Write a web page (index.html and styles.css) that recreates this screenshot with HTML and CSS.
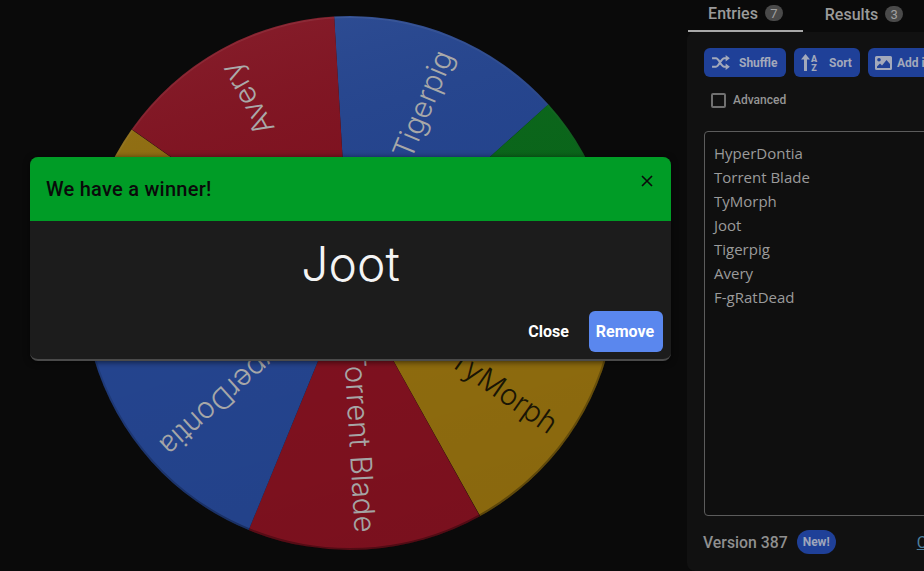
FILE: index.html
```html
<!DOCTYPE html>
<html lang="en">
<head>
<meta charset="utf-8">
<title>Wheel</title>
<link rel="stylesheet" href="styles.css">
</head>
<body>
<div class="page">
  <main class="stage">
    <svg class="wheel" width="534" height="534" viewBox="0 0 534 534">
      <defs>
        <linearGradient id="shade" x1="0.3" y1="0" x2="0.6" y2="1">
          <stop offset="0" stop-color="#fff" stop-opacity="0.05"/>
          <stop offset="0.5" stop-color="#000" stop-opacity="0"/>
          <stop offset="1" stop-color="#000" stop-opacity="0.04"/>
        </linearGradient>
        <linearGradient id="rim" x1="0.3" y1="0" x2="0.6" y2="1">
          <stop offset="0" stop-color="#fff" stop-opacity="0.08"/>
          <stop offset="0.5" stop-color="#000" stop-opacity="0.12"/>
          <stop offset="1" stop-color="#000" stop-opacity="0.35"/>
        </linearGradient>
      </defs>
      <g transform="translate(267 267)">
        <g transform="rotate(-67.7)"><path class="s-blue" d="M0 0L240.56 -115.85A267 267 0 0 1 240.56 115.85Z"/><text class="w-light" x="250" y="10" text-anchor="end">Tigerpig</text></g>
        <g transform="rotate(-16.3)"><path class="s-green" d="M0 0L240.56 -115.85A267 267 0 0 1 240.56 115.85Z"/><text class="w-light" x="250" y="10" text-anchor="end">Joot</text></g>
        <g transform="rotate(35.1)"><path class="s-yellow" d="M0 0L240.56 -115.85A267 267 0 0 1 240.56 115.85Z"/><text class="w-dark" x="250" y="10" text-anchor="end">TyMorph</text></g>
        <g transform="rotate(86.6)"><path class="s-red" d="M0 0L240.56 -115.85A267 267 0 0 1 240.56 115.85Z"/><text class="w-light" x="250" y="10" text-anchor="end">Torrent Blade</text></g>
        <g transform="rotate(138)"><path class="s-blue" d="M0 0L240.56 -115.85A267 267 0 0 1 240.56 115.85Z"/><text class="w-light" x="250" y="10" text-anchor="end">HyperDontia</text></g>
        <g transform="rotate(189.4)"><path class="s-yellow" d="M0 0L240.56 -115.85A267 267 0 0 1 240.56 115.85Z"/><text class="w-dark" x="250" y="10" text-anchor="end">F-gRatDead</text></g>
        <g transform="rotate(240.9)"><path class="s-red" d="M0 0L240.56 -115.85A267 267 0 0 1 240.56 115.85Z"/><text class="w-light" x="250" y="10" text-anchor="end">Avery</text></g>
        <circle class="wheel-shade" r="266"/>
      </g>
    </svg>
  </main>

  <aside class="side">
    <nav class="tabs">
      <div class="tab tab-active"><span>Entries</span><span class="count">7</span></div>
      <div class="tab"><span>Results</span><span class="count">3</span></div>
    </nav>
    <section class="panel">
      <div class="tools">
        <button class="tool tool-shuffle">
          <svg class="ico" width="19" height="15" viewBox="0 0 20 16"><path class="ico-line" d="M1 3.500H5.200C8.500 3.500 10.500 12.500 14 12.500H16M1 12.500H5.200C8.500 12.500 10.500 3.500 14 3.500H16"/><path class="ico-fill" d="M15.500 0L20 3.500L15.500 7ZM15.500 9L20 12.500L15.500 16Z"/></svg>
          <span>Shuffle</span>
        </button>
        <button class="tool tool-sort">
          <svg class="ico" width="18" height="17" viewBox="0 0 18 17"><path class="ico-fill" d="M4.500 0L9 5.500H6V17H3V5.500H0Z"/><text class="ico-text" x="13" y="7.500" text-anchor="middle">A</text><text class="ico-text" x="13" y="16.500" text-anchor="middle">Z</text></svg>
          <span>Sort</span>
        </button>
        <button class="tool tool-image">
          <svg class="ico" width="17" height="14" viewBox="0 0 17 14"><path class="ico-fill" fill-rule="evenodd" d="M1.500 0H15.500A1.500 1.500 0 0 1 17 1.500V12.500A1.500 1.500 0 0 1 15.500 14H1.500A1.500 1.500 0 0 1 0 12.500V1.500A1.500 1.500 0 0 1 1.500 0ZM4 2A1.800 1.800 0 1 0 4 5.600A1.800 1.800 0 1 0 4 2ZM2 12H15V8L11.500 4L7 9.500L5 7.500L2 10.500Z"/></svg>
          <span>Add image</span>
        </button>
      </div>
      <label class="advanced"><span class="check"></span><span>Advanced</span></label>
      <div class="entries">
        <div>HyperDontia</div>
        <div>Torrent Blade</div>
        <div>TyMorph</div>
        <div>Joot</div>
        <div>Tigerpig</div>
        <div>Avery</div>
        <div>F-gRatDead</div>
      </div>
      <footer class="foot">
        <span>Version 387</span>
        <span class="new">New!</span>
        <a class="log" href="#">Changelog</a>
      </footer>
    </section>
  </aside>
</div>

<div class="modal">
  <header class="modal-head">
    <span>We have a winner!</span>
    <svg class="modal-x" width="12" height="12" viewBox="0 0 12 12"><path d="M1 1L11 11M11 1L1 11"/></svg>
  </header>
  <div class="modal-body">Joot</div>
  <div class="modal-actions">
    <button class="btn-close">Close</button>
    <button class="btn-remove">Remove</button>
  </div>
</div>
</body>
</html>
```

FILE: styles.css
```css
* { box-sizing: border-box; }
html, body { margin: 0; height: 100%; overflow: hidden; background: #0a0a0a; }
body { font-family: Roboto, sans-serif; }

.page { display: flex; width: 924px; height: 571px; overflow: hidden; }

.stage { flex: 0 0 687px; padding: 16px 0 0 83px; }
.wheel { display: block; overflow: visible; }
.s-blue { fill: #24448e; }
.s-green { fill: #0a661a; }
.s-yellow { fill: #8f6c0e; }
.s-red { fill: #7f111f; }
.wheel text { font-family: Inter, sans-serif; font-size: 29.500px; font-weight: 300; }
.w-light { fill: #a9a9a9; }
.w-dark { fill: #1a1505; }
.wheel-shade { fill: url(#shade); stroke: url(#rim); stroke-width: 2; }

.side { flex: 0 0 auto; width: 400px; display: flex; flex-direction: column; }
.tabs { display: flex; height: 32px; padding-left: 1px; }
.tab { width: 115px; height: 32px; display: flex; justify-content: center; align-items: center; gap: 7px; padding-bottom: 4px; font-size: 16px; font-weight: 500; color: #9a9a9a; }
.tab:nth-child(2) { width: 122px; }
.tab-active { border-bottom: 2px solid #a8a8a8; }
.count { width: 18px; height: 16px; border-radius: 8px; background: #4a4a4a; color: #a0a0a0; font-size: 13px; font-weight: 400; display: flex; align-items: center; justify-content: center; }

.panel { flex: 1; background: #111; border-radius: 8px 0 0 8px; padding: 16px 0 0 17px; display: flex; flex-direction: column; }
.tools { display: flex; gap: 8px; height: 29px; }
.tool { height: 29px; border: 0; border-radius: 6px; background: #1f4098; color: #a3a9bb; font-family: Roboto, sans-serif; font-size: 12px; font-weight: 700; display: flex; align-items: center; padding: 0 7px; white-space: nowrap; flex: none; }
.tool-shuffle { width: 82px; gap: 9px; }
.tool-sort { width: 66px; gap: 10px; }
.tool-image { width: 110px; gap: 5px; }
.ico-line { fill: none; stroke: #a3a9bb; stroke-width: 2.200; }
.ico-fill { fill: #a3a9bb; }
.ico-text { fill: #a3a9bb; font-family: Roboto, sans-serif; font-size: 9px; font-weight: 900; }

.advanced { display: flex; align-items: center; gap: 7px; height: 16px; margin: 15px 0 0 7px; font-size: 12px; font-weight: 500; color: #959595; }
.check { width: 15px; height: 15px; border: 2px solid #707070; border-radius: 2px; }

.entries { width: 300px; height: 385px; margin-top: 23px; padding: 9px; border: 1px solid #5c5c5c; border-radius: 4px; font-family: "Open Sans", sans-serif; font-size: 15px; line-height: 24px; color: #9b9b9b; background: #0f0f0f; }

.foot { display: flex; align-items: center; height: 24px; margin: 14px 0 0 -1px; font-size: 15.800px; font-weight: 500; color: #8f8f8f; }
.new { margin-left: 9px; height: 24px; width: 39px; border-radius: 12px; background: #1f4098; color: #9ea6bb; font-size: 12px; font-weight: 700; display: flex; align-items: center; justify-content: center; }
.log { margin-left: 81px; color: #4d7f9e; font-size: 16px; font-weight: 400; }

.modal { position: absolute; left: 30px; top: 157px; width: 641px; height: 204px; background: #1c1c1c; border-radius: 8px; border-bottom: 2px solid #4a4a4a; box-shadow: 0 1px 6px rgba(0,0,0,0.6); display: flex; flex-direction: column; overflow: hidden; }
.modal-head { height: 64px; flex: none; background: #009c26; color: #0a0a0a; padding: 0 18px 0 16px; display: flex; align-items: center; justify-content: space-between; font-size: 20px; font-weight: 500; letter-spacing: 0.25px; }
.modal-x { display: block; margin-top: -16px; }
.modal-x path { fill: none; stroke: #0a0a0a; stroke-width: 1.600; }
.modal-body { height: 90px; flex: none; padding-top: 8px; text-align: center; font-family: Inter, sans-serif; font-weight: 300; font-size: 48px; line-height: 70px; color: #f4f4f4; }
.modal-actions { display: flex; justify-content: flex-end; align-items: center; gap: 0; padding-right: 8px; }
.modal-actions button { font-family: Roboto, sans-serif; font-size: 16px; font-weight: 700; border: 0; color: #fff; }
.btn-close { background: none; height: 41px; width: 81px; padding: 0; }
.btn-remove { width: 74px; height: 41px; padding: 0 2px 0 0; background: #5a87ee; border-radius: 6px; }
```
